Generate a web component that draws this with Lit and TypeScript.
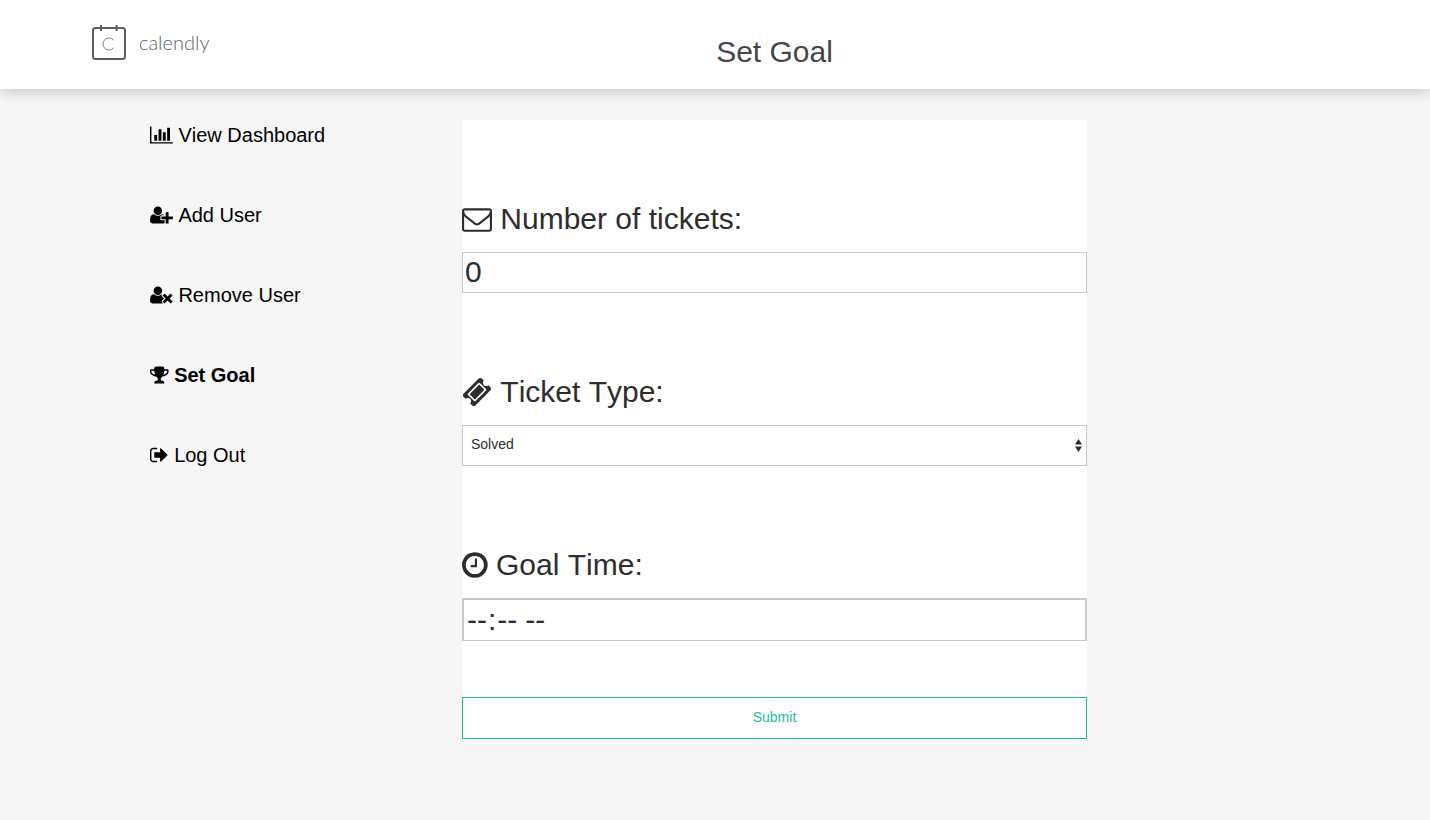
import { LitElement, html, css, svg } from "lit";
import { customElement, property } from "lit/decorators.js";

interface Glyph {
  viewBox: string;
  path: string;
}

const HEAD =
  "M704 896q-159 0-271.5-112.5t-112.5-271.5 112.5-271.5 271.5-112.5 271.5 112.5 112.5 271.5-112.5 271.5-271.5 112.5z";

const GLYPHS: Record<string, Glyph> = {
  chart: {
    viewBox: "0 0 2048 1792",
    path: "M640 896v512h-256v-512h256zm384-512v1024h-256v-1024h256zm1024 1152v128h-2048v-1536h128v1408h1920zm-640-896v768h-256v-768h256zm384-384v1152h-256v-1152h256z",
  },
  userPlus: {
    viewBox: "0 0 2048 1792",
    path:
      HEAD +
      "M1664 1024h352q13 0 22.5 9.5t9.5 22.5v192q0 13-9.5 22.5t-22.5 9.5h-352v352q0 13-9.5 22.5t-22.5 9.5h-192q-13 0-22.5-9.5t-9.5-22.5v-352h-352q-13 0-22.5-9.5t-9.5-22.5v-192q0-13 9.5-22.5t22.5-9.5h352v-352q0-13 9.5-22.5t22.5-9.5h192q13 0 22.5 9.5t9.5 22.5v352zm-736 224q0 52 38 90t90 38h256v238q-68 50-171 50h-874q-121 0-194-69t-73-190q0-53 3.5-103.5t14-109 26.5-108.5 43-97.5 62-81 85.5-53.5 111.5-20q19 0 39 17 79 61 154.5 91.5t164.5 30.5 164.5-30.5 154.5-91.5q20-17 39-17 132 0 217 96h-223q-52 0-90 38t-38 90v192z",
  },
  userTimes: {
    viewBox: "0 0 2048 1792",
    path:
      HEAD +
      "M1757 1216l249 249q9 9 9 23 0 13-9 22l-136 136q-9 9-22 9-14 0-23-9l-249-249-249 249q-9 9-23 9-13 0-22-9l-136-136q-9-9-9-22 0-14 9-23l249-249-249-249q-9-9-9-23 0-13 9-22l136-136q9-9 22-9 14 0 23 9l249 249 249-249q9-9 23-9 13 0 22 9l136 136q9 9 9 22 0 14-9 23z" +
      "M1259 1216L1078 1397Q1041 1434 1041 1488T1078 1578L1161 1661Q1143 1664 1125 1664H267q-121 0-194-69t-73-190q0-53 3.5-103.5t14-109 26.5-108.5 43-97.5 62-81 85.5-53.5 111.5-20q19 0 39 17 79 61 154.5 91.5t164.5 30.5 164.5-30.5 154.5-91.5q20-17 39-17 28 0 45 6L1078 854Q1041 890 1041 944T1078 1035z",
  },
  trophy: {
    viewBox: "0 0 1664 1792",
    path: "M458 883q-74-162-74-371h-256v96q0 78 94.5 162t235.5 113zm1078-275v-96h-256q0 209-74 371 141-29 235.5-113t94.5-162zm128-128v128q0 71-41.5 143t-112 130-173 97.5-215.5 44.5q-42 54-95 95-38 34-52.5 72.5t-14.5 89.5q0 54 30.5 91t97.5 37q75 0 133.5 45.5t58.5 114.5v64q0 14-9 23t-23 9h-832q-14 0-23-9t-9-23v-64q0-69 58.5-114.5t133.5-45.5q67 0 97.5-37t30.5-91q0-51-14.5-89.5t-52.5-72.5q-53-41-95-95-113-5-215.5-44.5t-173-97.5-112-130-41.5-143v-128q0-40 28-68t68-28h288v-96q0-66 47-113t113-47h576q66 0 113 47t47 113v96h288q40 0 68 28t28 68z",
  },
  signOut: {
    viewBox: "64 0 1664 1792",
    path: "M704 1440q0 4 1 20t.5 26.5-3 23.5-10 19.5-20.5 6.5h-320q-119 0-203.5-84.5t-84.5-203.5v-704q0-119 84.5-203.5t203.5-84.5h320q13 0 22.5 9.5t9.5 22.5q0 4 1 20t.5 26.5-3 23.5-10 19.5-20.5 6.5h-320q-66 0-113 47t-47 113v704q0 66 47 113t113 47h312l11.5 1 11.5 3 8 5.5 7 9 2 13.5zm928-544q0 26-19 45l-544 544q-19 19-45 19t-45-19-19-45v-288h-448q-26 0-45-19t-19-45v-384q0-26 19-45t45-19h448v-288q0-26 19-45t45-19 45 19l544 544q19 19 19 45z",
  },
  envelope: {
    viewBox: "0 0 1792 1792",
    path: "M1664 1504v-768q-32 36-69 66-268 206-426 338-51 43-83 67t-86.5 48.5-102.5 24.5h-2q-48 0-102.5-24.5t-86.5-48.5-83-67q-158-132-426-338-37-30-69-66v768q0 13 9.5 22.5t22.5 9.5h1472q13 0 22.5-9.5t9.5-22.5zm0-1051v-24.5l-.5-13-3-12.5-5.5-9-9-7.5-14-2.5h-1472q-13 0-22.5 9.5t-9.5 22.5q0 168 147 284 193 152 401 317 6 5 35 29.5t46 37.5 44.5 31.5 50.5 27.5 43 9h2q20 0 43-9t50.5-27.5 44.5-31.5 46-37.5 35-29.5q208-165 401-317 54-43 100.5-115.5t46.5-131.5zm128-37v1088q0 66-47 113t-113 47h-1472q-66 0-113-47t-47-113v-1088q0-66 47-113t113-47h1472q66 0 113 47t47 113z",
  },
  ticket: {
    viewBox: "0 0 1792 1792",
    path: "M1024 452l316 316-572 572-316-316zm-211 979l618-618q19-19 19-45t-19-45l-362-362q-18-18-45-18t-45 18l-618 618q-19 19-19 45t19 45l362 362q18 18 45 18t45-18zm889-637l-907 908q-37 37-90.5 37t-90.5-37l-126-126q56-56 56-136t-56-136-136-56-136 56l-125-126q-37-37-37-90.5t37-90.5l907-906q37-37 90.5-37t90.5 37l125 125q-56 56-56 136t56 136 136 56 136-56l126 125q37 37 37 90.5t-37 90.5z",
  },
  clock: {
    viewBox: "128 0 1536 1792",
    path: "M1024 544v448q0 14-9 23t-23 9h-320q-14 0-23-9t-9-23v-64q0-14 9-23t23-9h224v-352q0-14 9-23t23-9h64q14 0 23 9t9 23zm416 352q0-148-73-273t-198-198-273-73-273 73-198 198-73 273 73 273 198 198 273 73 273-73 198-198 73-273zm224 0q0 209-103 385.5t-279.5 279.5-385.5 103-385.5-103-279.5-279.5-103-385.5 103-385.5 279.5-279.5 385.5-103 385.5 103 279.5 279.5 103 385.5z",
  },
};

@customElement("glyph-icon")
class GlyphIcon extends LitElement {
  @property() name = "chart";

  static styles = css`
    :host {
      display: inline;
    }
    .glyph {
      height: 1em;
      width: auto;
      fill: currentColor;
      vertical-align: -0.15em;
    }
  `;

  render() {
    const glyph = GLYPHS[this.name];
    return html`<svg class="glyph" viewBox=${glyph.viewBox} aria-hidden="true">
      ${svg`<path d=${glyph.path}></path>`}
    </svg>`;
  }
}

const LINKS = [
  { icon: "chart", text: "View Dashboard" },
  { icon: "userPlus", text: "Add User" },
  { icon: "userTimes", text: "Remove User" },
  { icon: "trophy", text: "Set Goal", current: true },
  { icon: "signOut", text: "Log Out" },
];

@customElement("app-root")
class AppRoot extends LitElement {
  static styles = css`
    :host {
      display: block;
      min-height: 100vh;
      background: #f6f6f6;
      color: #2d2d2d;
      font-family: "Liberation Sans", Arial, Helvetica, sans-serif;
      font-kerning: none;
    }
    *,
    *::before,
    *::after {
      box-sizing: border-box;
    }
    .columns {
      display: grid;
      grid-template-columns: 462fr 625fr 343fr;
    }
    .header {
      position: relative;
      align-items: start;
      background: #fff;
      box-shadow: 0 2px 14px rgba(0, 0, 0, 0.22);
    }
    .brand {
      display: flex;
      align-items: center;
      gap: 13px;
      padding: 23px 0 0 91px;
      color: #5b5f69;
      font: 300 20px/24px Lato, sans-serif;
      text-decoration: none;
    }
    .mark {
      width: 35px;
      height: 38px;
      flex: none;
    }
    .title {
      margin: 0;
      padding: 32px 0 17px;
      color: #444649;
      font-size: 30px;
      font-weight: 400;
      line-height: 40px;
      text-align: center;
    }
    .nav {
      display: flex;
      flex-direction: column;
      align-items: flex-start;
      gap: 56px;
      padding: 34px 0 0 150px;
    }
    .link {
      color: #000;
      font-size: 20px;
      line-height: 24px;
      text-decoration: none;
      white-space: nowrap;
    }
    .current {
      font-weight: 700;
    }
    .form {
      display: flex;
      flex-direction: column;
      gap: 79px;
      margin-top: 31px;
      padding-top: 79px;
      background: #fff;
    }
    .field {
      display: flex;
      flex-direction: column;
      gap: 13px;
    }
    .label {
      font-size: 30px;
      line-height: 40px;
    }
    .control {
      display: block;
      width: 100%;
      height: 41px;
      margin: 0;
      padding: 0 2px 2px;
      border: 1px solid #c8c8c8;
      border-radius: 0;
      outline: none;
      background: #fff;
      color: inherit;
      font-family: inherit;
      font-size: 30px;
      appearance: none;
    }
    .number {
      appearance: textfield;
    }
    .picker {
      display: grid;
      align-items: center;
    }
    .picker > * {
      grid-area: 1 / 1;
    }
    .select {
      padding: 0 8px 3px;
      font-size: 14px;
    }
    .arrows {
      justify-self: end;
      width: 7px;
      height: 13px;
      margin-right: 5px;
      fill: #2d2d2d;
      pointer-events: none;
    }
    .time {
      height: 43px;
      padding: 1px 2px;
      border-width: 2px 2px 1px;
    }
    .time::-webkit-calendar-picker-indicator {
      display: none;
    }
    .actions {
      display: flex;
      flex-direction: column;
      gap: 56px;
    }
    .submit {
      height: 42px;
      padding: 0 0 2px;
      border: 1px solid #1abc9c;
      border-radius: 0;
      background: #fff;
      color: #1abc9c;
      font-family: inherit;
      font-size: 14px;
    }
  `;

  render() {
    return html`
      <header class="header columns">
        <a class="brand" href="#">
          <svg class="mark" viewBox="0 0 35 38" aria-hidden="true">
            <rect x="2" y="5" width="32" height="31" rx="2.5" fill="none" stroke="#5b5f69" stroke-width="2"></rect>
            <path d="M10 2v6M25.500 2v6" stroke="#5b5f69" stroke-width="2"></path>
            <path d="M22.600 17.200a6 6 0 1 0 0 7.600" fill="none" stroke="#7b7e86" stroke-width="1"></path>
          </svg>
          <span>calendly</span>
        </a>
        <h1 class="title">Set Goal</h1>
      </header>
      <div class="columns">
        <nav class="nav">
          ${LINKS.map(
            (link) => html`<a class="link ${link.current ? "current" : ""}" href="#"
              ><glyph-icon name=${link.icon}></glyph-icon> ${link.text}</a
            >`
          )}
        </nav>
        <form class="form">
          <div class="field">
            <label class="label" for="tickets"><glyph-icon name="envelope"></glyph-icon> Number of tickets:</label>
            <input class="control number" id="tickets" type="number" value="0" />
          </div>
          <div class="field">
            <label class="label" for="type"><glyph-icon name="ticket"></glyph-icon> Ticket Type:</label>
            <div class="picker">
              <select class="control select" id="type">
                <option>Solved</option>
              </select>
              <svg class="arrows" viewBox="0 0 7 13" aria-hidden="true">
                <path d="M3.500 0L7 5.500H0zM3.500 13L7 7.500H0z"></path>
              </svg>
            </div>
          </div>
          <div class="actions">
            <div class="field">
              <label class="label" for="time"><glyph-icon name="clock"></glyph-icon> Goal Time:</label>
              <input class="control time" id="time" type="time" />
            </div>
            <button class="submit" type="button">Submit</button>
          </div>
        </form>
      </div>
    `;
  }
}
